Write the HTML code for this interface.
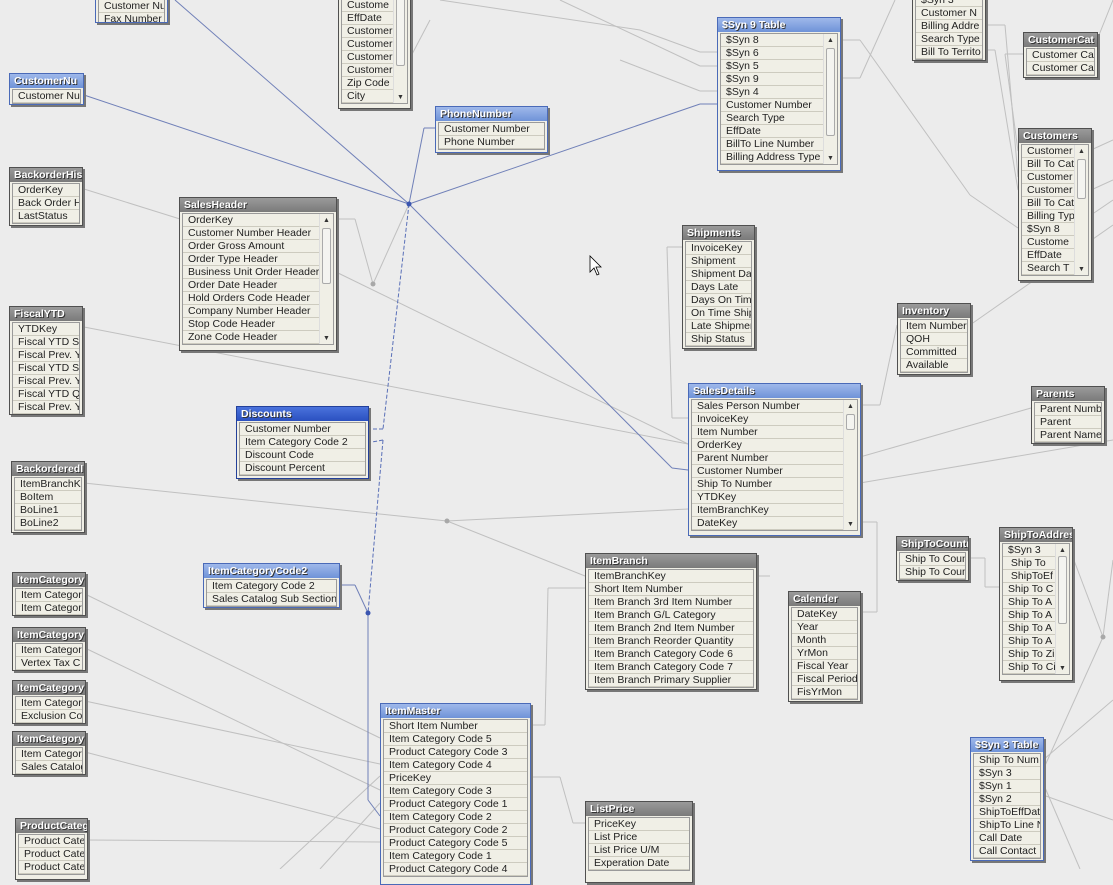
<!DOCTYPE html>
<html><head><meta charset="utf-8"><style>
body{margin:0;width:1113px;height:869px;overflow:hidden;background:#ececec;position:relative;font-family:"Liberation Sans",sans-serif;font-size:10.5px;color:#222}
svg{position:absolute;left:0;top:0}
.b{position:absolute;border:1px solid #505050;background:#f0efe6;box-shadow:2px 2px 0 #777;overflow:hidden}
.h{height:14px;line-height:14px;background:linear-gradient(#9a9a9a,#7a7a7a);color:#fff;font-weight:bold;padding-left:4px;text-shadow:1px 1px 0 #333;white-space:nowrap;overflow:hidden;font-size:10.5px}
.bl .h{background:linear-gradient(#9fb8ea,#6f93d8)}
.bl{border-color:#4a6ab8}
.db .h{background:linear-gradient(#4a72dc,#2a50c0)}
.db{border-color:#23409a}
.bd{border:1px solid #9a9a9a;margin:1px 2px 2px 2px;background:#f0efe6;position:relative}
.r{height:12px;line-height:12px;border-bottom:1px solid #cdcbbf;padding-left:5px;white-space:nowrap;overflow:hidden}
.sb{position:absolute;right:0;top:0;bottom:0;width:13px;background:#f0efe6;border-left:1px solid #ddd}
.sb .t{position:absolute;left:2px;right:2px;border:1px solid #aaa;background:#f4f4f0;border-radius:2px}
.sb .u{position:absolute;left:3px;top:3px;font-size:7px;color:#333}
.sb .d{position:absolute;left:3px;bottom:2px;font-size:7px;color:#333}
</style></head><body>
<svg width="1113" height="869">
<g stroke="#c0c0c0" stroke-width="1" fill="none">
<line x1="84" y1="189" x2="180" y2="219"/>
<line x1="84" y1="327" x2="688" y2="444"/>
<line x1="336" y1="219" x2="355" y2="219"/><line x1="355" y1="219" x2="373" y2="284"/><line x1="373" y1="284" x2="409" y2="204"/>
<line x1="336" y1="272" x2="688" y2="444"/>
<line x1="84" y1="483" x2="447" y2="521"/><line x1="447" y1="521" x2="688" y2="509"/><line x1="447" y1="521" x2="585" y2="576"/>
<line x1="684" y1="247" x2="667" y2="247"/><line x1="667" y1="247" x2="672" y2="418"/><line x1="672" y1="418" x2="688" y2="418"/>
<line x1="860" y1="405" x2="880" y2="405"/><line x1="880" y1="405" x2="897" y2="325"/>
<line x1="860" y1="457" x2="1031" y2="408"/>
<line x1="860" y1="483" x2="1113" y2="440"/>
<line x1="860" y1="522" x2="877" y2="522"/><line x1="877" y1="522" x2="877" y2="612"/><line x1="877" y1="612" x2="860" y2="612"/>
<line x1="756" y1="576" x2="770" y2="576"/>
<line x1="530" y1="725" x2="545" y2="725"/><line x1="545" y1="725" x2="548" y2="588"/><line x1="548" y1="588" x2="585" y2="588"/>
<line x1="530" y1="777" x2="560" y2="777"/><line x1="560" y1="777" x2="573" y2="823"/><line x1="573" y1="823" x2="585" y2="823"/>
<line x1="85" y1="594" x2="380" y2="738"/><line x1="85" y1="648" x2="380" y2="790"/><line x1="85" y1="701" x2="380" y2="764"/><line x1="85" y1="752" x2="380" y2="829"/>
<line x1="86" y1="840" x2="380" y2="842"/><line x1="280" y1="869" x2="380" y2="776"/><line x1="320" y1="869" x2="380" y2="803"/>
<line x1="840" y1="40" x2="860" y2="40"/><line x1="860" y1="40" x2="970" y2="195"/><line x1="970" y1="195" x2="1018" y2="228"/>
<line x1="840" y1="78" x2="860" y2="78"/><line x1="860" y1="78" x2="895" y2="0"/>
<line x1="700" y1="52" x2="717" y2="52"/><line x1="700" y1="52" x2="640" y2="30"/><line x1="640" y1="30" x2="440" y2="0"/>
<line x1="700" y1="66" x2="717" y2="66"/><line x1="700" y1="66" x2="560" y2="0"/>
<line x1="700" y1="91" x2="717" y2="91"/><line x1="700" y1="91" x2="620" y2="60"/>
<line x1="985" y1="25" x2="1005" y2="25"/><line x1="1005" y1="25" x2="1018" y2="177"/>
<line x1="985" y1="50" x2="995" y2="50"/><line x1="995" y1="50" x2="1018" y2="190"/>
<line x1="1023" y1="54" x2="1005" y2="54"/><line x1="1005" y1="54" x2="1018" y2="151"/>
<line x1="970" y1="325" x2="1113" y2="225"/>
<line x1="968" y1="558" x2="985" y2="558"/><line x1="985" y1="558" x2="985" y2="587"/><line x1="985" y1="587" x2="999" y2="587"/>
<line x1="1072" y1="555" x2="1103" y2="637"/><line x1="1103" y1="637" x2="1043" y2="770"/><line x1="1103" y1="637" x2="1113" y2="560"/>
<line x1="1043" y1="760" x2="1113" y2="700"/><line x1="1043" y1="783" x2="1080" y2="869"/><line x1="1043" y1="795" x2="1113" y2="820"/>
<line x1="1091" y1="150" x2="1113" y2="140"/><line x1="1091" y1="190" x2="1113" y2="180"/><line x1="1091" y1="215" x2="1113" y2="200"/>
<line x1="1097" y1="40" x2="1113" y2="0"/>
<line x1="409" y1="60" x2="430" y2="20"/>
</g>
<g stroke="#7080b8" stroke-width="1" fill="none">
<line x1="84" y1="95" x2="409" y2="204"/>
<line x1="175" y1="0" x2="409" y2="204"/>
<line x1="409" y1="204" x2="424" y2="128"/><line x1="424" y1="128" x2="435" y2="128"/>
<line x1="409" y1="204" x2="700" y2="104"/><line x1="700" y1="104" x2="717" y2="104"/>
<line x1="409" y1="204" x2="672" y2="468"/><line x1="672" y1="468" x2="688" y2="470"/>
<line x1="368" y1="613" x2="368" y2="800"/><line x1="368" y1="800" x2="380" y2="816"/>
<line x1="341" y1="585" x2="355" y2="585"/><line x1="355" y1="585" x2="368" y2="613"/>
</g>
<g stroke="#5a70b8" stroke-width="1" fill="none" stroke-dasharray="4,2">
<line x1="409" y1="204" x2="383" y2="429"/><line x1="383" y1="429" x2="372" y2="429"/>
<line x1="383" y1="440" x2="368" y2="613"/><line x1="383" y1="440" x2="372" y2="442"/>
</g>
<g fill="#3a55b0"><circle cx="409" cy="204" r="2.5"/><circle cx="368" cy="613" r="2.5"/></g>
<g fill="#a8a8a8"><circle cx="373" cy="284" r="2.5"/><circle cx="447" cy="521" r="2.5"/><circle cx="1103" cy="637" r="2.5"/></g>
</svg>

<div class="b bl" style="left:95px;top:-17px;width:71px;height:38px"><div class="h"></div><div class="bd"><div class="r">Customer Nu</div><div class="r">Fax Number</div></div></div>

<div class="b" style="left:338px;top:-16px;width:71px;height:123px"><div class="bd" style="margin-top:0"><div class="r">Custome</div><div class="r">Custome</div><div class="r">EffDate</div><div class="r">Customer</div><div class="r">Customer</div><div class="r">Customer</div><div class="r">Customer</div><div class="r">Zip Code</div><div class="r">City</div><div class="sb"><div class="t" style="top:8px;height:70px"></div><div class="d">▼</div></div></div></div>

<div class="b bl" style="left:9px;top:73px;width:73px;height:30px"><div class="h">CustomerNu</div><div class="bd"><div class="r">Customer Nu</div></div></div>

<div class="b bl" style="left:435px;top:106px;width:111px;height:45px"><div class="h">PhoneNumber</div><div class="bd"><div class="r">Customer Number</div><div class="r">Phone Number</div></div></div>

<div class="b bl" style="left:717px;top:17px;width:122px;height:152px"><div class="h">$Syn 9 Table</div><div class="bd"><div class="r">$Syn 8</div><div class="r">$Syn 6</div><div class="r">$Syn 5</div><div class="r">$Syn 9</div><div class="r">$Syn 4</div><div class="r">Customer Number</div><div class="r">Search Type</div><div class="r">EffDate</div><div class="r">BillTo Line Number</div><div class="r">Billing Address Type</div><div class="sb"><div class="u">▲</div><div class="t" style="top:14px;height:86px"></div><div class="d">▼</div></div></div></div>

<div class="b" style="left:912px;top:-8px;width:72px;height:67px"><div class="bd" style="margin-top:0"><div class="r">$Syn 3</div><div class="r">Customer N</div><div class="r">Billing Addre</div><div class="r">Search Type</div><div class="r">Bill To Territo</div></div></div>

<div class="b" style="left:1023px;top:32px;width:73px;height:44px"><div class="h">CustomerCat</div><div class="bd"><div class="r">Customer Cat</div><div class="r">Customer Cat</div></div></div>

<div class="b" style="left:1018px;top:128px;width:72px;height:151px"><div class="h">Customers</div><div class="bd"><div class="r">Customer</div><div class="r">Bill To Cat</div><div class="r">Customer</div><div class="r">Customer</div><div class="r">Bill To Cat</div><div class="r">Billing Typ</div><div class="r">$Syn 8</div><div class="r">Custome</div><div class="r">EffDate</div><div class="r">Search T</div><div class="sb"><div class="u">▲</div><div class="t" style="top:14px;height:38px"></div><div class="d">▼</div></div></div></div>

<div class="b" style="left:9px;top:167px;width:72px;height:57px"><div class="h">BackorderHis</div><div class="bd"><div class="r">OrderKey</div><div class="r">Back Order Hi</div><div class="r">LastStatus</div></div></div>

<div class="b" style="left:179px;top:197px;width:156px;height:152px"><div class="h">SalesHeader</div><div class="bd"><div class="r">OrderKey</div><div class="r">Customer Number Header</div><div class="r">Order Gross Amount</div><div class="r">Order Type Header</div><div class="r">Business Unit Order Header</div><div class="r">Order Date Header</div><div class="r">Hold Orders Code Header</div><div class="r">Company Number Header</div><div class="r">Stop Code Header</div><div class="r">Zone Code Header</div><div class="sb"><div class="u">▲</div><div class="t" style="top:14px;height:54px"></div><div class="d">▼</div></div></div></div>

<div class="b" style="left:682px;top:225px;width:71px;height:122px"><div class="h">Shipments</div><div class="bd"><div class="r">InvoiceKey</div><div class="r">Shipment</div><div class="r">Shipment Da</div><div class="r">Days Late</div><div class="r">Days On Tim</div><div class="r">On Time Ship</div><div class="r">Late Shipmen</div><div class="r">Ship Status</div></div></div>

<div class="b" style="left:9px;top:306px;width:72px;height:107px"><div class="h">FiscalYTD</div><div class="bd"><div class="r">YTDKey</div><div class="r">Fiscal YTD Sa</div><div class="r">Fiscal Prev. Y</div><div class="r">Fiscal YTD Sa</div><div class="r">Fiscal Prev. Y</div><div class="r">Fiscal YTD Qu</div><div class="r">Fiscal Prev. Y</div></div></div>

<div class="b" style="left:897px;top:303px;width:72px;height:70px"><div class="h">Inventory</div><div class="bd"><div class="r">Item Number</div><div class="r">QOH</div><div class="r">Committed</div><div class="r">Available</div></div></div>

<div class="b db" style="left:236px;top:406px;width:131px;height:71px"><div class="h">Discounts</div><div class="bd"><div class="r">Customer Number</div><div class="r">Item Category Code 2</div><div class="r">Discount Code</div><div class="r">Discount Percent</div></div></div>

<div class="b bl" style="left:688px;top:383px;width:171px;height:151px"><div class="h">SalesDetails</div><div class="bd"><div class="r">Sales Person Number</div><div class="r">InvoiceKey</div><div class="r">Item Number</div><div class="r">OrderKey</div><div class="r">Parent Number</div><div class="r">Customer Number</div><div class="r">Ship To Number</div><div class="r">YTDKey</div><div class="r">ItemBranchKey</div><div class="r">DateKey</div><div class="sb"><div class="u">▲</div><div class="t" style="top:14px;height:14px"></div><div class="d">▼</div></div></div></div>

<div class="b" style="left:1031px;top:386px;width:72px;height:56px"><div class="h">Parents</div><div class="bd"><div class="r">Parent Numb</div><div class="r">Parent</div><div class="r">Parent Name</div></div></div>

<div class="b" style="left:11px;top:461px;width:72px;height:70px"><div class="h">BackorderedI</div><div class="bd"><div class="r">ItemBranchK</div><div class="r">BoItem</div><div class="r">BoLine1</div><div class="r">BoLine2</div></div></div>

<div class="b bl" style="left:203px;top:563px;width:135px;height:43px"><div class="h">ItemCategoryCode2</div><div class="bd"><div class="r">Item Category Code 2</div><div class="r">Sales Catalog Sub Section</div></div></div>

<div class="b" style="left:585px;top:553px;width:170px;height:135px"><div class="h">ItemBranch</div><div class="bd"><div class="r">ItemBranchKey</div><div class="r">Short Item Number</div><div class="r">Item Branch 3rd Item Number</div><div class="r">Item Branch G/L Category</div><div class="r">Item Branch 2nd Item Number</div><div class="r">Item Branch Reorder Quantity</div><div class="r">Item Branch Category Code 6</div><div class="r">Item Branch Category Code 7</div><div class="r">Item Branch Primary Supplier</div></div></div>

<div class="b" style="left:896px;top:536px;width:71px;height:43px"><div class="h">ShipToCountr</div><div class="bd"><div class="r">Ship To Coun</div><div class="r">Ship To Count</div></div></div>

<div class="b" style="left:999px;top:527px;width:72px;height:152px"><div class="h">ShipToAddres</div><div class="bd"><div class="r">$Syn 3</div><div class="r">&nbsp;Ship To</div><div class="r">&nbsp;ShipToEf</div><div class="r">Ship To C</div><div class="r">Ship To A</div><div class="r">Ship To A</div><div class="r">Ship To A</div><div class="r">Ship To A</div><div class="r">Ship To Zi</div><div class="r">Ship To Ci</div><div class="sb"><div class="u">▲</div><div class="t" style="top:12px;height:66px"></div><div class="d">▼</div></div></div></div>

<div class="b" style="left:788px;top:591px;width:71px;height:109px"><div class="h">Calender</div><div class="bd"><div class="r">DateKey</div><div class="r">Year</div><div class="r">Month</div><div class="r">YrMon</div><div class="r">Fiscal Year</div><div class="r">Fiscal Period</div><div class="r">FisYrMon</div></div></div>

<div class="b" style="left:12px;top:572px;width:72px;height:42px"><div class="h">ItemCategory</div><div class="bd"><div class="r">Item Categor</div><div class="r">Item Categor</div></div></div>
<div class="b" style="left:12px;top:627px;width:72px;height:42px"><div class="h">ItemCategory</div><div class="bd"><div class="r">Item Categor</div><div class="r">Vertex Tax C</div></div></div>
<div class="b" style="left:12px;top:680px;width:72px;height:42px"><div class="h">ItemCategory</div><div class="bd"><div class="r">Item Categor</div><div class="r">Exclusion Cod</div></div></div>
<div class="b" style="left:12px;top:731px;width:72px;height:42px"><div class="h">ItemCategory</div><div class="bd"><div class="r">Item Categor</div><div class="r">Sales Catalog</div></div></div>

<div class="b bl" style="left:380px;top:703px;width:149px;height:180px"><div class="h">ItemMaster</div><div class="bd"><div class="r">Short Item Number</div><div class="r">Item Category Code 5</div><div class="r">Product Category Code 3</div><div class="r">Item Category Code 4</div><div class="r">PriceKey</div><div class="r">Item Category Code 3</div><div class="r">Product Category Code 1</div><div class="r">Item Category Code 2</div><div class="r">Product Category Code 2</div><div class="r">Product Category Code 5</div><div class="r">Item Category Code 1</div><div class="r">Product Category Code 4</div></div></div>

<div class="b" style="left:585px;top:801px;width:106px;height:80px"><div class="h">ListPrice</div><div class="bd"><div class="r">PriceKey</div><div class="r">List Price</div><div class="r">List Price U/M</div><div class="r">Experation Date</div></div></div>

<div class="b bl" style="left:970px;top:737px;width:72px;height:122px"><div class="h">$Syn 3 Table</div><div class="bd"><div class="r">Ship To Num</div><div class="r">$Syn 3</div><div class="r">$Syn 1</div><div class="r">$Syn 2</div><div class="r">ShipToEffDat</div><div class="r">ShipTo Line N</div><div class="r">Call Date</div><div class="r">Call Contact</div></div></div>

<div class="b" style="left:15px;top:818px;width:71px;height:60px"><div class="h">ProductCateg</div><div class="bd"><div class="r">Product Cate</div><div class="r">Product Cate</div><div class="r">Product Cate</div></div></div>

<svg width="1113" height="869" style="pointer-events:none"><path d="M590 256 L590 272 L594 268 L597 275 L599 274 L596 267 L601 267 Z" fill="#fff" stroke="#000" stroke-width="0.8"/></svg>
</body></html>
